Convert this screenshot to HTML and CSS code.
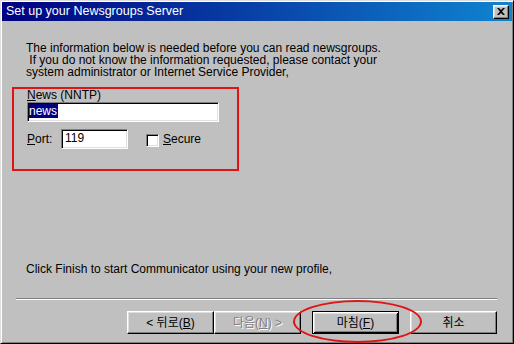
FILE: index.html
```html
<!DOCTYPE html>
<html lang="en">
<head>
<meta charset="utf-8">
<title>Set up your Newsgroups Server</title>
<link rel="stylesheet" href="styles.css">
</head>
<body>
<div class="window">
  <div class="titlebar">
    <span class="title">Set up your Newsgroups Server</span>
    <span class="close-btn">
      <svg width="8" height="7" viewBox="0 0 8 7"><path d="M0 0h2l2 2 2-2h2L5 3.5 8 7H6L4 5 2 7H0l3-3.5z" fill="#000"/></svg>
    </span>
  </div>
  <div class="content">
    <div class="intro">
      <div class="intro-line">The information below is needed before you can read newsgroups.</div>
      <div class="intro-line">&nbsp;If you do not know the information requested, please contact your</div>
      <div class="intro-line">system administrator or Internet Service Provider,</div>
    </div>
    <div class="mark-box">
      <div class="label"><u>N</u>ews (NNTP)</div>
      <div class="field field-wide"><span class="selected">news</span></div>
      <div class="port-row">
        <span class="label port-label"><u>P</u>ort:</span>
        <div class="field field-port">119</div>
        <span class="checkbox"></span>
        <span class="label"><u>S</u>ecure</span>
      </div>
    </div>
    <p class="finish-note">Click Finish to start Communicator using your new profile,</p>
    <div class="separator"></div>
    <div class="buttons">
      <div class="btn-pair">
        <span class="btn">&lt; 뒤로(<u>B</u>)</span>
        <span class="btn disabled">다음(<u>N</u>) &gt;</span>
      </div>
      <span class="btn default">마침(<u>F</u>)</span>
      <span class="btn">취소</span>
    </div>
  </div>
  <div class="mark-ellipse"></div>
</div>
</body>
</html>
```
FILE: styles.css
```css
html, body {
  margin: 0;
  padding: 0;
  background: #c0c0c0;
}

.window {
  position: relative;
  width: 514px;
  height: 344px;
  box-sizing: border-box;
  border: 1px solid;
  border-color: #dfdfdf #000 #000 #dfdfdf;
  box-shadow: inset 1px 1px #fff, inset -1px -1px #808080;
  padding: 1px;
  background: #c0c0c0;
  font-family: "Liberation Sans", "Noto Sans CJK KR", sans-serif;
  font-size: 12px;
  color: #000;
  overflow: hidden;
}

.titlebar {
  height: 19px;
  display: flex;
  align-items: center;
  justify-content: space-between;
  padding: 0 3px 0 4px;
  background: linear-gradient(to right, #000080, #1084d0);
  color: #fff;
}

.title {
  font-size: 12.5px;
  line-height: 19px;
}

.close-btn {
  width: 16px;
  height: 14px;
  box-sizing: border-box;
  background: #c0c0c0;
  border: 1px solid;
  border-color: #fff #000 #000 #fff;
  box-shadow: inset -1px -1px #808080, inset 1px 1px #dfdfdf;
  display: flex;
  align-items: center;
  justify-content: center;
}

.close-btn svg {
  display: block;
}

.content {
  display: flex;
  flex-direction: column;
  align-items: flex-start;
}

.intro {
  margin: 21px 0 0 24px;
}

.intro-line {
  height: 12px;
  line-height: 12px;
  font-size: 12px;
  white-space: nowrap;
}

.mark-box {
  margin: 9px 0 0 10px;
  width: 227px;
  height: 84px;
  box-sizing: border-box;
  border: 2px solid #e01414;
  padding: 0 0 0 13px;
}

.label {
  line-height: 12px;
}

.field {
  box-sizing: border-box;
  height: 20px;
  background: #fff;
  border: 1px solid;
  border-color: #808080 #fff #fff #808080;
  box-shadow: inset 1px 1px #000, inset -1px -1px #dfdfdf;
  padding: 1px 1px 0 1px;
  line-height: 14px;
}

.field-wide {
  width: 192px;
  margin-top: 1px;
}

.selected {
  display: inline-block;
  background: #000080;
  color: #fff;
  padding-right: 1px;
}

.port-row {
  display: flex;
  align-items: center;
  margin-top: 7px;
}

.port-label {
  width: 34px;
}

.field-port {
  width: 67px;
  padding-left: 3px;
}

.checkbox {
  width: 13px;
  height: 13px;
  box-sizing: border-box;
  margin: 2px 4px 0 18px;
  background: #fff;
  border: 1px solid;
  border-color: #808080 #fff #fff #808080;
  box-shadow: inset 1px 1px #000, inset -1px -1px #dfdfdf;
}

.finish-note {
  margin: 92px 0 0 24px;
  line-height: 12px;
}

.separator {
  margin: 23px 0 0 14px;
  width: 481px;
  border-top: 1px solid #808080;
  border-bottom: 1px solid #fff;
  box-sizing: border-box;
  height: 2px;
}

.buttons {
  display: flex;
  gap: 11px;
  margin: 11px 0 0 125px;
}

.btn-pair {
  display: flex;
}

.btn {
  width: 87px;
  height: 23px;
  box-sizing: border-box;
  border: 1px solid;
  border-color: #fff #000 #000 #fff;
  box-shadow: inset -1px -1px #808080, inset 1px 1px #dfdfdf;
  display: flex;
  align-items: center;
  justify-content: center;
  font-size: 12px;
  line-height: 14px;
}

.btn.disabled {
  color: #808080;
  text-shadow: 1px 1px #fff;
}

.btn.default {
  border: 1px solid #000;
  box-shadow: inset 1px 1px #fff, inset -1px -1px #000, inset 2px 2px #dfdfdf, inset -2px -2px #808080;
}

.mark-ellipse {
  position: absolute;
  left: 292px;
  top: 299px;
  width: 129px;
  height: 43px;
  box-sizing: border-box;
  border: 2px solid #e01414;
  border-radius: 50%;
}
```
